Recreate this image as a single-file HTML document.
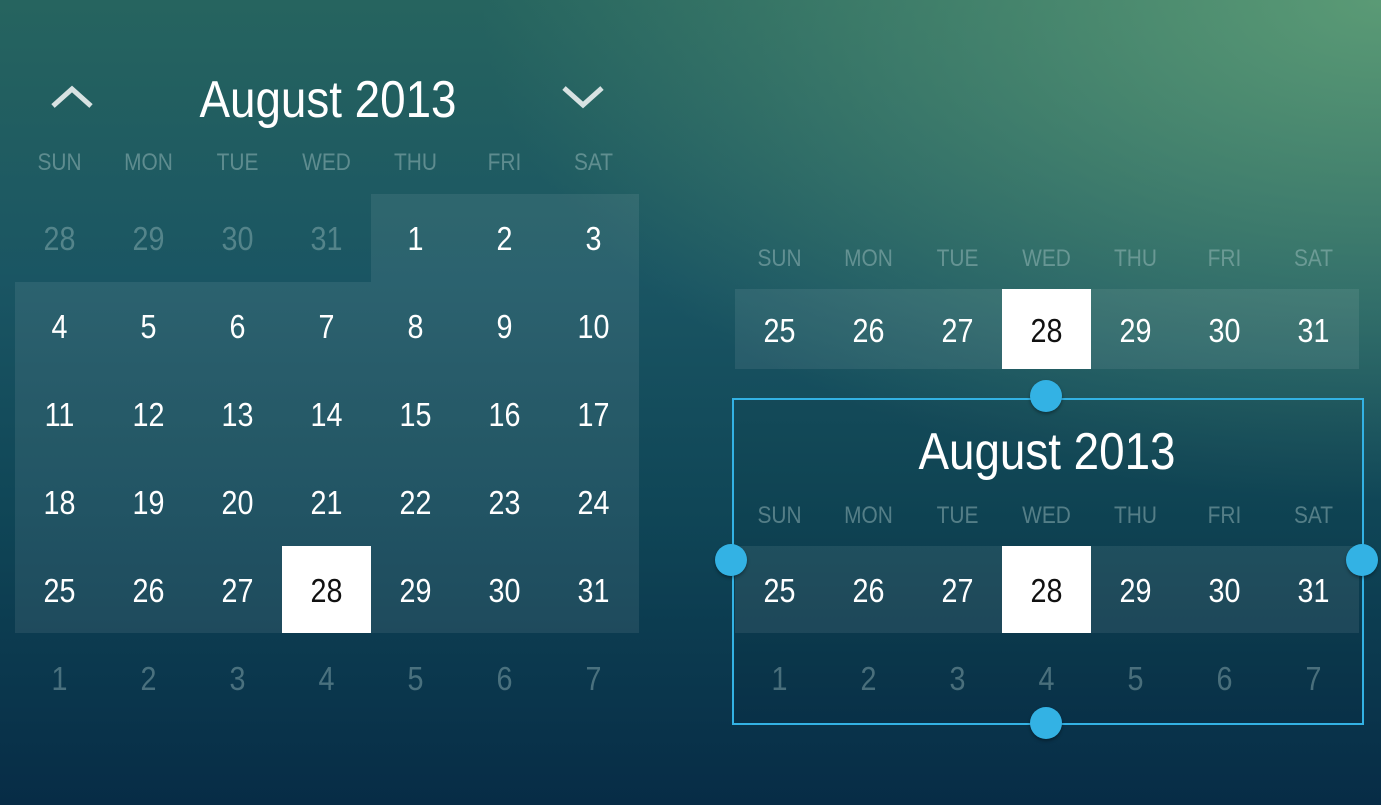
<!DOCTYPE html><html><head><style>
body{margin:0;width:1381px;height:805px;overflow:hidden;position:relative;font-family:"Liberation Sans",sans-serif;
background:radial-gradient(ellipse 900px 500px at 1381px 0px,rgba(96,160,120,.9),rgba(96,160,120,0)),linear-gradient(180deg,#26645f 0%,#1a5563 35%,#0f4556 65%,#072c46 100%);}
.a{position:absolute;text-align:center;transform:scaleX(.88);}
.c{position:absolute;width:89px;text-align:center;color:#fff;font-size:33px;transform:scaleX(.87);}
.d{position:absolute;width:89px;text-align:center;color:rgba(170,200,200,.45);font-size:24px;transform:scaleX(.87);}
.g{color:rgba(170,200,200,.4)}
.hl{position:absolute;background:rgba(255,255,255,.08)}
.sel{position:absolute;background:#fff}
.h{position:absolute;width:32px;height:32px;border-radius:50%;background:#33b2e4;box-shadow:0 2px 3px rgba(0,0,0,.35)}
</style></head><body>
<div class="hl" style="left:371px;top:194px;width:268px;height:88px"></div>
<div class="hl" style="left:15px;top:282px;width:624px;height:351px"></div>
<div class="sel" style="left:282px;top:546px;width:89px;height:87px"></div>
<svg style="position:absolute;left:50px;top:84px" width="44" height="26"><path d="M3 22 L22 5 L41 22" stroke="#d8e2e2" stroke-width="5" fill="none"/></svg>
<svg style="position:absolute;left:561px;top:84px" width="44" height="26"><path d="M3 4 L22 21 L41 4" stroke="#d8e2e2" stroke-width="5" fill="none"/></svg>
<div class="a" style="left:128px;width:400px;top:70px;font-size:52px;color:#fff">August 2013</div>
<div class="hl" style="left:735px;top:289px;width:624px;height:80px"></div>
<div class="sel" style="left:1002px;top:289px;width:89px;height:80px"></div>
<div style="position:absolute;left:732px;top:398px;width:628px;height:323px;border:2px solid #33b2e4;background:rgba(0,0,0,.04)"></div>
<div class="hl" style="left:735px;top:546px;width:624px;height:87px"></div>
<div class="sel" style="left:1002px;top:546px;width:89px;height:87px"></div>
<div class="a" style="left:847px;width:400px;top:422px;font-size:52px;color:#fff">August 2013</div>
<div class="h" style="left:1030px;top:380px"></div>
<div class="h" style="left:715px;top:544px"></div>
<div class="h" style="left:1346px;top:544px"></div>
<div class="h" style="left:1030px;top:707px"></div>
<div id="L"></div>
<script>
var o='';function cell(x,y,t,cls,st){o+='<div class="'+cls+'" style="left:'+x+'px;top:'+y+'px;'+(st||'')+'">'+t+'</div>';}
var D=['SUN','MON','TUE','WED','THU','FRI','SAT'];
for(var i=0;i<7;i++){cell(15+89*i,149,D[i],'d');cell(735+89*i,245,D[i],'d');cell(735+89*i,502,D[i],'d');}
var rows=[[28,29,30,31,1,2,3],[4,5,6,7,8,9,10],[11,12,13,14,15,16,17],[18,19,20,21,22,23,24],[25,26,27,28,29,30,31],[1,2,3,4,5,6,7]];
for(var r=0;r<6;r++)for(var i=0;i<7;i++){var g=(r==0&&i<4)||r==5;cell(15+89*i,220+88*r,rows[r][i],'c'+(g?' g':''),(r==4&&i==3)?'color:#111':'');}
for(var i=0;i<7;i++){cell(735+89*i,312,25+i,'c',i==3?'color:#111':'');cell(735+89*i,572,25+i,'c',i==3?'color:#111':'');cell(735+89*i,660,1+i,'c g');}
document.getElementById('L').outerHTML=o;
</script>
</body></html>
